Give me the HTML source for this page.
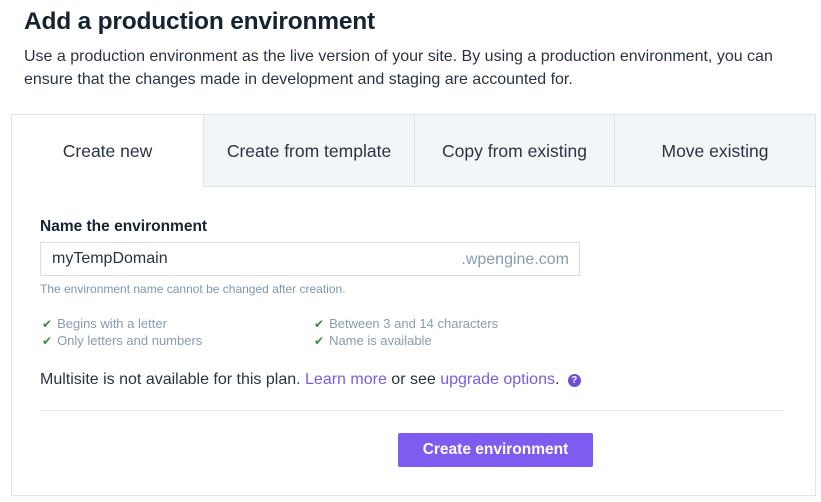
<!DOCTYPE html>
<html><head><style>
body{margin:0;width:821px;height:502px;background:#fff;font-family:"Liberation Sans",sans-serif;color:#1f2a36;position:relative;overflow:hidden}
.a{position:absolute;white-space:nowrap}
h1{position:absolute;left:24px;top:8px;margin:0;font-size:24.5px;font-weight:bold;color:#162330;letter-spacing:-0.2px}
.p{left:24px;font-size:16px;color:#2a3440}
.card{position:absolute;left:11px;top:114px;width:803px;height:380px;border:1px solid #dde4ec}
.tab{position:absolute;top:0;height:72px;background:#f3f6f9;border-left:1px solid #dde4ec;border-bottom:1px solid #dde4ec;box-sizing:border-box;font-size:17.5px;color:#2a3440;text-align:center;line-height:72px}
.chk{color:#3a8a3a;font-size:12px;margin-right:5px}
.s{font-size:13px;color:#8a9cb0}
.lnk{color:#7b5ce0}
</style></head><body>
<h1>Add a production environment</h1>
<div class="a p" style="top:48px">Use a production environment as the live version of your site. By using a production environment, you can</div>
<div class="a p" style="top:71px">ensure that the changes made in development and staging are accounted for.</div>
<div class="card">
<div class="a" style="left:0;top:0;width:191px;height:72px;line-height:72px;text-align:center;font-size:17.5px;color:#2a3440">Create new</div>
<div class="tab" style="left:191px;width:211px">Create from template</div>
<div class="tab" style="left:402px;width:200px">Copy from existing</div>
<div class="tab" style="left:602px;width:201px">Move existing</div>
<div class="a" style="left:28px;top:103px;font-size:15.5px;font-weight:bold;color:#162330">Name the environment</div>
<div class="a" style="left:28px;top:127px;width:538px;height:32px;border:1px solid #d9dfe6"></div>
<div class="a" style="left:40px;top:135px;font-size:16px;color:#2a3440">myTempDomain</div>
<div class="a" style="right:246px;top:136px;font-size:16px;color:#8a9cb0">.wpengine.com</div>
<div class="a" style="left:28px;top:167px;font-size:12px;color:#7f97ad">The environment name cannot be changed after creation.</div>
<div class="a s" style="left:30px;top:201px"><span class="chk">✔</span>Begins with a letter</div>
<div class="a s" style="left:30px;top:218px"><span class="chk">✔</span>Only letters and numbers</div>
<div class="a s" style="left:302px;top:201px"><span class="chk">✔</span>Between 3 and 14 characters</div>
<div class="a s" style="left:302px;top:218px"><span class="chk">✔</span>Name is available</div>
<div class="a" style="left:28px;top:256px;font-size:16px;color:#2a3440">Multisite is not available for this plan. <span class="lnk">Learn more</span> or see <span class="lnk">upgrade options</span>. <span style="display:inline-block;width:13px;height:13px;border-radius:50%;background:#6b4fd8;color:#fff;font-size:10px;font-weight:bold;text-align:center;line-height:13px;vertical-align:1px;margin-left:4px">?</span></div>
<div class="a" style="left:28px;top:295px;width:745px;height:1px;background:#e6ebf0"></div>
<div class="a" style="left:386px;top:318px;width:195px;height:34px;background:#7e5cef;border-radius:2px;color:#fff;font-size:15.5px;font-weight:bold;text-align:center;line-height:34px">Create environment</div>
</div>
</body></html>
